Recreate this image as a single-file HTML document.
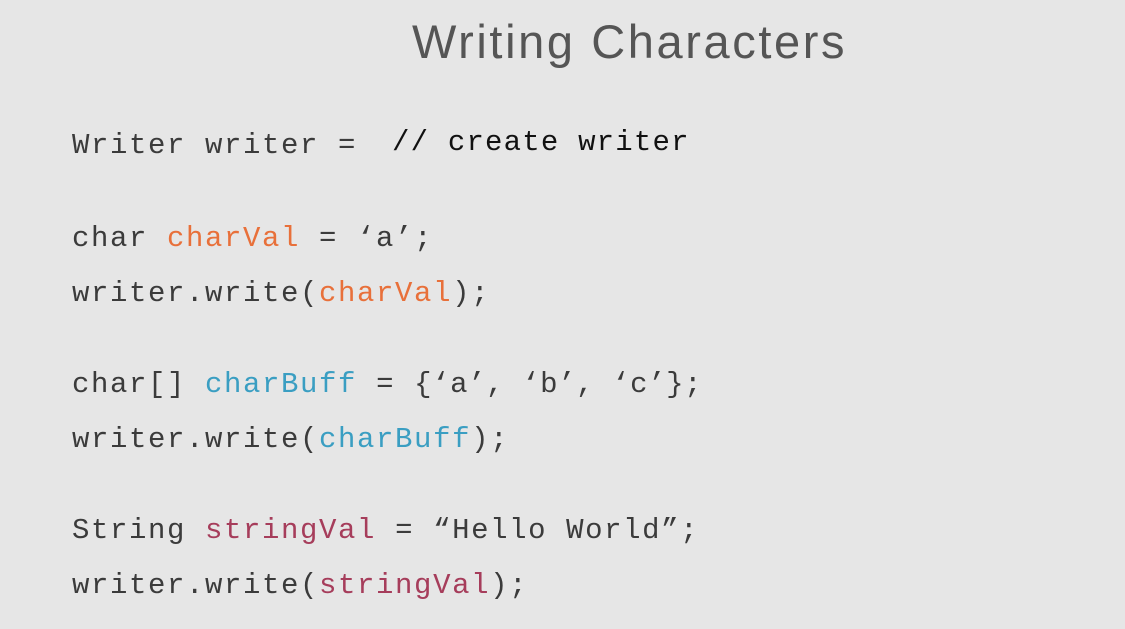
<!DOCTYPE html>
<html><head><style>
html,body{margin:0;padding:0}
body{width:1125px;height:629px;background:#e6e6e6;position:relative;overflow:hidden}
.t{position:absolute;left:412px;top:14px;font:47px "Liberation Sans",sans-serif;color:#555;letter-spacing:2.6px;white-space:nowrap}
.l{position:absolute;left:72px;font:29px "Liberation Mono",monospace;letter-spacing:1.6px;color:#3b3b3b;white-space:pre;line-height:34px}
.o{color:#e8703a}.b{color:#3a9ec2}.r{color:#a63d5b}.k{color:#111}
.q{letter-spacing:0.6px}
</style></head><body>
<div class="t">Writing Characters</div>
<div class="l" style="top:129px">Writer writer = <span class="k" style="position:relative;top:-3px;left:16px;letter-spacing:1.2px">// create writer</span></div>
<div class="l" style="top:222px">char <span class="o">charVal</span> = ‘a’;</div>
<div class="l" style="top:277px">writer.write(<span class="o">charVal</span>);</div>
<div class="l" style="top:368px">char[] <span class="b">charBuff</span> = <span class="q">{‘a’, ‘b’, ‘c’};</span></div>
<div class="l" style="top:423px">writer.write(<span class="b">charBuff</span>);</div>
<div class="l" style="top:514px">String <span class="r">stringVal</span> = “Hello World”;</div>
<div class="l" style="top:569px">writer.write(<span class="r">stringVal</span>);</div>
</body></html>
